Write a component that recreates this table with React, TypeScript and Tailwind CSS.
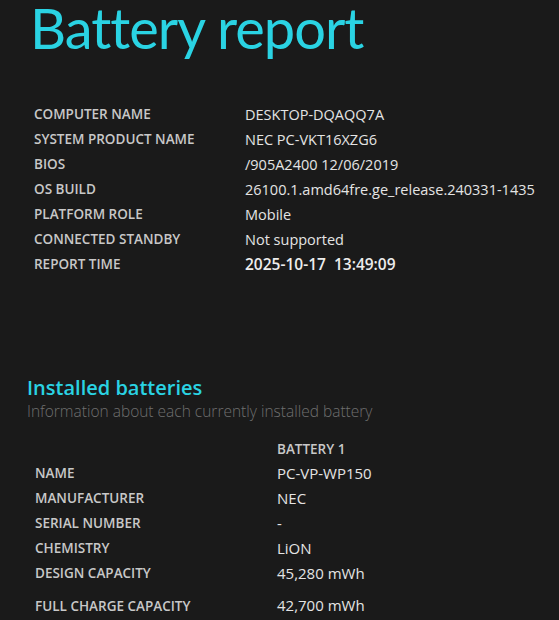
export default function App() {
  const info = [
    { label: "COMPUTER NAME", value: "DESKTOP-DQAQQ7A" },
    { label: "SYSTEM PRODUCT NAME", value: "NEC PC-VKT16XZG6" },
    { label: "BIOS", value: "/905A2400 12/06/2019" },
    { label: "OS BUILD", value: "26100.1.amd64fre.ge_release.240331-1435" },
    { label: "PLATFORM ROLE", value: "Mobile" },
    { label: "CONNECTED STANDBY", value: "Not supported" },
  ];

  const battery = [
    { label: "NAME", value: "PC-VP-WP150" },
    { label: "MANUFACTURER", value: "NEC" },
    { label: "SERIAL NUMBER", value: "-" },
    { label: "CHEMISTRY", value: "LiON" },
    { label: "DESIGN CAPACITY", value: "45,280 mWh" },
  ];

  const label = "p-0 text-[13.5px] font-semibold text-[#c8c8c8]";

  return (
    <div className="w-[559px] h-[620px] overflow-hidden bg-[#1a1a1a] font-['Open_Sans',sans-serif]">
      <h1 className="pl-[30px] h-[70px] font-['Lato',sans-serif] text-[56px] leading-[56px] tracking-[-1px] text-[#2ad3e3]">
        Battery report
      </h1>

      {/* system info */}
      <table className="ml-[34px] mt-[32px] border-collapse">
        <tbody>
          {info.map((row) => (
            <tr key={row.label} className="h-[25px]">
              <td className={`w-[211px] ${label}`}>{row.label}</td>
              <td className="p-0 text-[14.5px] text-[#e4e4e4]">{row.value}</td>
            </tr>
          ))}
          <tr className="h-[25px]">
            <td className={`w-[211px] ${label}`}>REPORT TIME</td>
            <td className="p-0 text-[15.5px] font-semibold text-[#ededed] whitespace-pre">
              2025-10-17  13:49:09
            </td>
          </tr>
        </tbody>
      </table>

      {/* installed batteries */}
      <div className="pl-[27px] mt-[98px]">
        <h2 className="text-[20px] leading-[26px] font-semibold text-[#2ad3e3]">Installed batteries</h2>
        <p className="text-[15.5px] leading-[20px] font-light text-[#6f6f6f]">
          Information about each currently installed battery
        </p>
      </div>

      <table className="ml-[35px] mt-[16px] border-collapse">
        <tbody>
          <tr className="h-[24px]">
            <td className="w-[242px] p-0"></td>
            <td className={label}>BATTERY 1</td>
          </tr>
          {battery.map((row) => (
            <tr key={row.label} className="h-[25px]">
              <td className={`w-[242px] ${label}`}>{row.label}</td>
              <td className="p-0 text-[15px] text-[#e4e4e4]">{row.value}</td>
            </tr>
          ))}
          <tr className="h-[33px] align-bottom">
            <td className={`w-[242px] pb-[3px] ${label}`}>FULL CHARGE CAPACITY</td>
            <td className="p-0 pb-[3px] text-[15px] text-[#e4e4e4]">42,700 mWh</td>
          </tr>
        </tbody>
      </table>
    </div>
  );
}
